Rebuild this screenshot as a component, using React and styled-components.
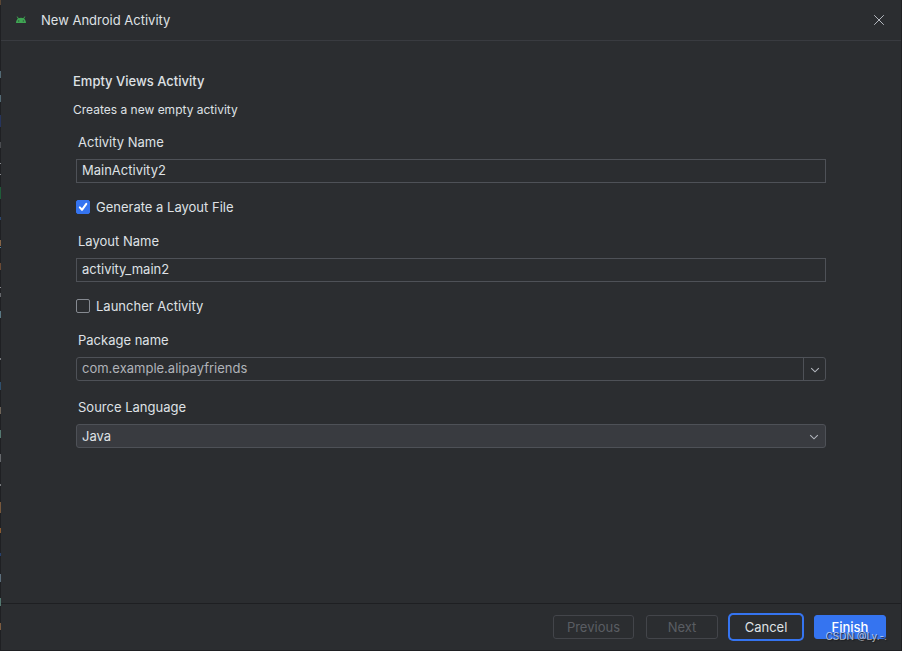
import React, { useState } from "react";
import styled, { createGlobalStyle } from "styled-components";

const GlobalStyle = createGlobalStyle`
  * {
    box-sizing: border-box;
  }
  body {
    margin: 0;
    background-color: #2b2d30;
    color: #dfe1e5;
    font-family: Inter, "Liberation Sans", sans-serif;
    font-size: 13px;
    line-height: 20px;
  }
  input,
  select,
  button {
    font: inherit;
    color: inherit;
  }
`;

const Dialog = styled.div`
  position: relative;
  display: flex;
  flex-direction: column;
  min-height: 100vh;
  border: 1px solid #1f2023;
  border-width: 0 1px 1px;
`;
const EditorEdge = styled.div`
  position: absolute;
  top: 0;
  bottom: 0;
  left: -1px;
  width: 1px;
`;
const EditorMark = styled.span`
  position: absolute;
  left: 0;
  width: 1px;
  top: ${(props) => props.$top}px;
  height: ${(props) => props.$size}px;
  background-color: ${(props) => props.$color};
`;
const Header = styled.header`
  display: flex;
  align-items: center;
  height: 41px;
  padding: 0 16px 0 13px;
  border-bottom: 1px solid #393b40;
`;
const Title = styled.h1`
  flex: 1;
  margin: 0 0 0 13px;
  font-size: 13px;
  font-weight: 400;
`;
const CloseButton = styled.button`
  display: flex;
  padding: 0;
  border: none;
  background: none;
  color: #b4b8bf;
`;
const Content = styled.main`
  flex: 1;
  padding: 30px 75px 30px 72px;
`;
const Heading = styled.h2`
  margin: 0;
  font-size: 13px;
  font-weight: 500;
`;
const Description = styled.p`
  margin: 9px 0 12px;
  font-size: 12px;
`;
const Form = styled.form`
  display: flex;
  flex-direction: column;
  padding-left: 3px;
`;
const Label = styled.label`
  margin-bottom: 7px;
  padding-left: 2px;
`;
const TextInput = styled.input`
  width: 100%;
  height: 24px;
  padding: 0 5px 2px;
  border: 1px solid #4e5157;
  border-radius: 0;
  outline: none;
  background-color: #2b2d30;
`;
const CheckRow = styled.label`
  display: flex;
  align-items: center;
  gap: 6px;
  margin: 14px 0;
`;
const Checkbox = styled.input`
  appearance: none;
  width: 14px;
  height: 14px;
  margin: 0;
  border: 1px solid #868a91;
  border-radius: 2px;
  &:checked {
    border-color: #3574f0;
    background: #3574f0
      url("data:image/svg+xml,%3Csvg xmlns='http://www.w3.org/2000/svg' viewBox='0 0 12 12' fill='none' stroke='white' stroke-width='2' stroke-linecap='round' stroke-linejoin='round'%3E%3Cpath d='M2.8 6.4 5 8.8 9.3 2.8'/%3E%3C/svg%3E");
  }
`;
const ComboBox = styled.div`
  display: flex;
  height: 24px;
  margin-bottom: 16px;
  border: 1px solid #4e5157;
  border-radius: 3px;
`;
const ComboInput = styled.input`
  flex: 1;
  min-width: 0;
  padding: 0 5px 2px;
  border: none;
  outline: none;
  background: none;
  color: #b0b3b9;
`;
const ComboButton = styled.button`
  display: flex;
  align-items: center;
  justify-content: center;
  width: 22px;
  padding: 1px 0 0;
  border: none;
  border-left: 1px solid #4e5157;
  background: none;
  color: #b4b8bf;
`;
const SelectBox = styled.div`
  display: grid;
  align-items: center;
  color: #b4b8bf;
  > * {
    grid-area: 1 / 1;
  }
  > svg {
    justify-self: end;
    margin: 1px 7px 0;
    pointer-events: none;
  }
`;
const Select = styled.select`
  appearance: none;
  width: 100%;
  height: 24px;
  padding: 0 5px;
  border: 1px solid #4e5157;
  border-radius: 3px;
  outline: none;
  background-color: #393b40;
  color: #dfe1e5;
`;
const Footer = styled.footer`
  display: flex;
  justify-content: flex-end;
  gap: 12px;
  padding: 11px 15px;
  border-top: 1px solid #1e1f22;
`;
const Button = styled.button`
  min-width: 72px;
  height: 24px;
  padding: 0 13px;
  border: 1px solid ${(props) => (props.$primary ? "#3574f0" : "#2b2d30")};
  border-radius: 3px;
  background-color: ${(props) => (props.$primary ? "#3574f0" : "#2b2d30")};
  color: ${(props) => (props.$primary ? "#ffffff" : "#dfe1e5")};
  font-weight: ${(props) => (props.$primary ? 500 : 400)};
  line-height: 22px;
  box-shadow: ${(props) => (props.$focused ? "0 0 0 2px #3574f0" : "none")};
  &:disabled {
    border-color: #43454a;
    color: #5a5d63;
  }
`;
const Watermark = styled.span`
  position: absolute;
  right: 14px;
  bottom: 8px;
  color: rgba(255, 255, 255, 0.65);
  font-size: 10px;
  line-height: 12px;
  text-shadow: 1px 1px 1px #1e1f22;
  pointer-events: none;
`;

const marks = [
  { top: 0, size: 5, color: "#5a4634" },
  { top: 71, size: 7, color: "#536a75" },
  { top: 95, size: 7, color: "#536a75" },
  { top: 115, size: 12, color: "#26345c" },
  { top: 142, size: 6, color: "#4a4c50" },
  { top: 163, size: 1, color: "#8a8c90" },
  { top: 174, size: 1, color: "#8a8c90" },
  { top: 187, size: 12, color: "#1f5c38" },
  { top: 217, size: 3, color: "#2b4670" },
  { top: 240, size: 6, color: "#856446" },
  { top: 247, size: 1, color: "#4c7fa0" },
  { top: 263, size: 7, color: "#6b4a34" },
  { top: 287, size: 1, color: "#8a8c90" },
  { top: 293, size: 4, color: "#66686c" },
  { top: 311, size: 7, color: "#5a7884" },
  { top: 358, size: 2, color: "#77797d" },
  { top: 382, size: 8, color: "#2f4f6c" },
  { top: 407, size: 7, color: "#6f6458" },
  { top: 430, size: 8, color: "#547870" },
  { top: 454, size: 8, color: "#66686c" },
  { top: 484, size: 2, color: "#77797d" },
  { top: 502, size: 11, color: "#77583c" },
  { top: 528, size: 5, color: "#8a5a30" },
  { top: 553, size: 3, color: "#26406c" },
  { top: 574, size: 8, color: "#5c6e7c" },
  { top: 598, size: 8, color: "#547870" },
  { top: 623, size: 7, color: "#7d5c40" },
];

const AndroidIcon = () => (
  <svg width="14" height="14" viewBox="0 0 14 14" aria-hidden="true">
    <path d="M3.2 3.6 4.6 6M10.8 3.6 9.4 6" stroke="#3fa653" />
    <path
      d="M2 10C2 7.8 3 6.2 4.4 5.2Q7 4.2 9.6 5.2C11 6.2 12 7.8 12 10ZM4.2 7.4v1h1v-1ZM8.8 7.4v1h1v-1Z"
      fill="#3fa653"
      fillRule="evenodd"
    />
  </svg>
);

const CloseIcon = () => (
  <svg width="12" height="12" viewBox="0 0 12 12" aria-hidden="true">
    <path d="M1.2 1.2 10.8 10.8M10.8 1.2 1.2 10.8" stroke="currentColor" />
  </svg>
);

const ChevronIcon = () => (
  <svg width="10" height="6" viewBox="0 0 10 6" aria-hidden="true">
    <path
      d="M1.2 1.2 5 4.8 8.8 1.2"
      fill="none"
      stroke="currentColor"
      strokeWidth="1.1"
    />
  </svg>
);

const App = () => {
  const [generateLayout, setGenerateLayout] = useState(true);
  const [launcher, setLauncher] = useState(false);

  return (
    <Dialog>
      <GlobalStyle />
      <EditorEdge>
        {marks.map((mark) => (
          <EditorMark
            key={mark.top}
            $top={mark.top}
            $size={mark.size}
            $color={mark.color}
          />
        ))}
      </EditorEdge>
      <Header>
        <AndroidIcon />
        <Title>New Android Activity</Title>
        <CloseButton type="button" aria-label="Close">
          <CloseIcon />
        </CloseButton>
      </Header>
      <Content>
        <Heading>Empty Views Activity</Heading>
        <Description>Creates a new empty activity</Description>
        <Form>
          <Label htmlFor="activityName">Activity Name</Label>
          <TextInput id="activityName" defaultValue="MainActivity2" />
          <CheckRow>
            <Checkbox
              type="checkbox"
              checked={generateLayout}
              onChange={(e) => setGenerateLayout(e.target.checked)}
            />
            Generate a Layout File
          </CheckRow>
          <Label htmlFor="layoutName">Layout Name</Label>
          <TextInput id="layoutName" defaultValue="activity_main2" />
          <CheckRow>
            <Checkbox
              type="checkbox"
              checked={launcher}
              onChange={(e) => setLauncher(e.target.checked)}
            />
            Launcher Activity
          </CheckRow>
          <Label htmlFor="packageName">Package name</Label>
          <ComboBox>
            <ComboInput
              id="packageName"
              defaultValue="com.example.alipayfriends"
            />
            <ComboButton type="button" aria-label="Show packages">
              <ChevronIcon />
            </ComboButton>
          </ComboBox>
          <Label htmlFor="language">Source Language</Label>
          <SelectBox>
            <Select id="language" defaultValue="Java">
              <option>Java</option>
              <option>Kotlin</option>
            </Select>
            <ChevronIcon />
          </SelectBox>
        </Form>
      </Content>
      <Footer>
        <Button type="button" disabled>
          Previous
        </Button>
        <Button type="button" disabled>
          Next
        </Button>
        <Button type="button" $focused>
          Cancel
        </Button>
        <Button type="button" $primary>
          Finish
        </Button>
      </Footer>
      <Watermark>CSDN @Ly.-.</Watermark>
    </Dialog>
  );
};

export default App;
